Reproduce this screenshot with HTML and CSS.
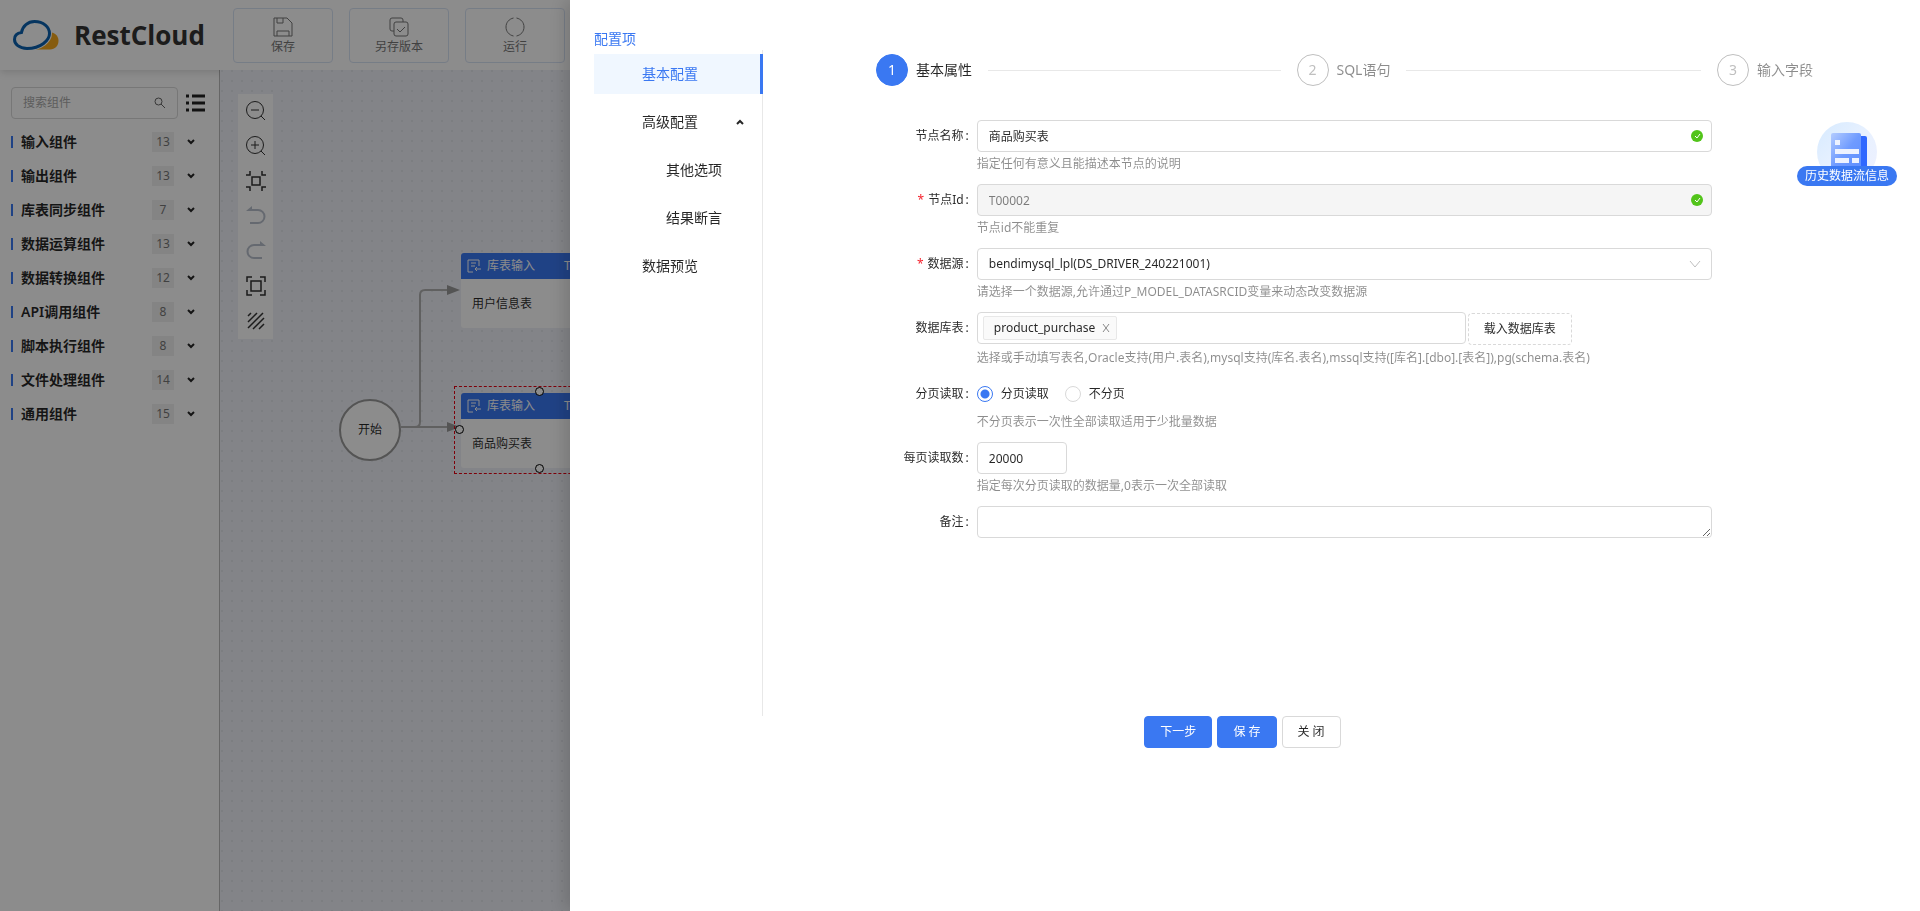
FILE: index.html
```html
<!DOCTYPE html>
<html lang="zh-CN">
<head>
    <meta charset="UTF-8">
    <title>RestCloud</title>
    <link rel="stylesheet" href="styles.css">
</head>
<body>
    <div class="app">
        <header class="header">
            <a class="logo" href="#">
                <svg width="46" height="30" viewBox="0 0 46 30">
                    <path d="M22 29.5h15c5 0 8.5-4 8.5-8.5s-3-8-7-8.5z" fill="#f5a81c"/>
                    <path d="M14 28.5C6 28.5 1.5 24 1.5 19.5c0-4 3-6.5 7-7C9.500 6 15 1.5 21.5 1.5c9 0 15 5.5 15 12s-8.5 15-22.5 15z" fill="#fff" stroke="#fff" stroke-width="5"/>
                    <path d="M14 28.5C6 28.5 1.5 24 1.5 19.5c0-4 3-6.5 7-7C9.500 6 15 1.5 21.5 1.5c9 0 15 5.5 15 12s-8.5 15-22.5 15z" fill="#fff" stroke="#0b62b0" stroke-width="3"/>
                </svg>
                <span>RestCloud</span>
            </a>
            <button class="tool-btn" type="button">
                <svg width="20" height="20" viewBox="0 0 20 20"><path d="M1 1h13l5 5v13H1zM4 1v5h6V1M4 19v-5h12v5"/></svg>
                <span>保存</span>
            </button>
            <button class="tool-btn" type="button">
                <svg width="20" height="20" viewBox="0 0 20 20"><rect x="5" y="5" width="14" height="14" rx="2"/><path d="M5 14H3a2 2 0 0 1-2-2V3a2 2 0 0 1 2-2h9a2 2 0 0 1 2 2v2M8 12l3 3 5-5"/></svg>
                <span>另存版本</span>
            </button>
            <button class="tool-btn" type="button">
                <svg width="20" height="20" viewBox="0 0 20 20"><path d="M8.5 1C4 2 1 5.5 1 10s3 8 7.5 9M11.5 1C16 2 19 5.5 19 10s-3 8-7.5 9"/></svg>
                <span>运行</span>
            </button>
        </header>
        <div class="main">
            <aside class="sidebar">
                <div class="search-row">
                    <div class="search">
                        <input type="text" aria-label="搜索组件" placeholder="搜索组件">
                        <svg width="12" height="12" viewBox="0 0 12 12"><circle cx="4.5" cy="4.5" r="3.5"/><path d="M7 7l4 4"/></svg>
                    </div>
                    <svg class="list-icon" width="19" height="18" viewBox="0 0 19 18"><path d="M0 2h3M6 2h13M0 9h3M6 9h13M0 16h3M6 16h13"/></svg>
                </div>
                <ul class="groups">
                    <li><b>输入组件</b><i>13</i><svg width="8" height="6" viewBox="0 0 8 6"><path d="M1 1l3 3 3-3"/></svg></li>
                    <li><b>输出组件</b><i>13</i><svg width="8" height="6" viewBox="0 0 8 6"><path d="M1 1l3 3 3-3"/></svg></li>
                    <li><b>库表同步组件</b><i>7</i><svg width="8" height="6" viewBox="0 0 8 6"><path d="M1 1l3 3 3-3"/></svg></li>
                    <li><b>数据运算组件</b><i>13</i><svg width="8" height="6" viewBox="0 0 8 6"><path d="M1 1l3 3 3-3"/></svg></li>
                    <li><b>数据转换组件</b><i>12</i><svg width="8" height="6" viewBox="0 0 8 6"><path d="M1 1l3 3 3-3"/></svg></li>
                    <li><b>API调用组件</b><i>8</i><svg width="8" height="6" viewBox="0 0 8 6"><path d="M1 1l3 3 3-3"/></svg></li>
                    <li><b>脚本执行组件</b><i>8</i><svg width="8" height="6" viewBox="0 0 8 6"><path d="M1 1l3 3 3-3"/></svg></li>
                    <li><b>文件处理组件</b><i>14</i><svg width="8" height="6" viewBox="0 0 8 6"><path d="M1 1l3 3 3-3"/></svg></li>
                    <li><b>通用组件</b><i>15</i><svg width="8" height="6" viewBox="0 0 8 6"><path d="M1 1l3 3 3-3"/></svg></li>
                </ul>
            </aside>
            <div class="canvas">
                <div class="zoom-bar">
                    <button type="button" aria-label="缩小"><svg viewBox="0 0 20 20"><circle cx="9" cy="9" r="8.5"/><path d="M5 9h8M15 15l4 4"/></svg></button>
                    <button type="button" aria-label="放大"><svg viewBox="0 0 20 20"><circle cx="9" cy="9" r="8.5"/><path d="M5 9h8M9 5v8M15 15l4 4"/></svg></button>
                    <button type="button" aria-label="适应画布"><svg class="bold" viewBox="0 0 20 20"><path d="M6 6h8v8H6zM0 4h4V0M16 0v4h4M0 16h4v4M20 16h-4v4"/></svg></button>
                    <button type="button" aria-label="撤销"><svg class="off" viewBox="0 0 20 20"><path d="M3 4h9a6 6 0 0 1 0 13H4"/><path class="tip" d="M0 5l6-5v5z"/></svg></button>
                    <button type="button" aria-label="重做"><svg class="off" viewBox="0 0 20 20"><path d="M17 4H8a6 6 0 0 0 0 13h8"/><path class="tip" d="M20 5l-6-5v5z"/></svg></button>
                    <button type="button" aria-label="实际大小"><svg class="bold" viewBox="0 0 20 20"><path d="M5 5h10v10H5zM1 6V1h5M14 1h5v5M1 14v5h5M14 19h5v-5"/></svg></button>
                    <button type="button" aria-label="网格"><svg class="bold" viewBox="0 0 20 20"><path d="M2 5l3-3M2 11l9-9M2 17L17 2M7 18L18 7M13 18l5-5"/></svg></button>
                </div>
                <svg class="edges" width="350" height="500" viewBox="0 0 350 500">
                    <path d="M181 357h47" class="line"/>
                    <path d="M181 357h14q5 0 5-5V225q0-5 5-5h23" class="line"/>
                    <path d="M227 215l13 5-13 5zM227 352l13 5-13 5z" class="head"/>
                </svg>
                <div class="start">开始</div>
                <div class="node node-user">
                    <div class="node-head">
                        <svg width="14" height="14" viewBox="0 0 14 14"><path d="M6 13H1V1h11v6M4 4h5M4 7h4M14 10H8M10 8l-2 2 2 2"/></svg>
                        <span>库表输入</span><em>T00001</em>
                    </div>
                    <div class="node-body">用户信息表</div>
                </div>
                <div class="selection"></div>
                <div class="node node-buy">
                    <div class="node-head">
                        <svg width="14" height="14" viewBox="0 0 14 14"><path d="M6 13H1V1h11v6M4 4h5M4 7h4M14 10H8M10 8l-2 2 2 2"/></svg>
                        <span>库表输入</span><em>T00002</em>
                    </div>
                    <div class="node-body">商品购买表</div>
                </div>
                <span class="port port-top"></span>
                <span class="port port-left"></span>
                <span class="port port-bottom"></span>
            </div>
        </div>
    </div>

    <div class="mask"></div>

    <div class="drawer">
        <div class="drawer-body">
            <nav class="menu">
                <div class="menu-title">配置项</div>
                <ul>
                    <li><a class="active" href="#">基本配置</a></li>
                    <li>
                        <a href="#">高级配置<svg width="8" height="6" viewBox="0 0 8 6"><path d="M1 5l3-3 3 3"/></svg></a>
                        <ul>
                            <li><a href="#">其他选项</a></li>
                            <li><a href="#">结果断言</a></li>
                        </ul>
                    </li>
                    <li><a href="#">数据预览</a></li>
                </ul>
            </nav>
            <div class="content">
                <ol class="steps">
                    <li class="current"><i>1</i><span>基本属性</span></li>
                    <li><i>2</i><span>SQL语句</span></li>
                    <li><i>3</i><span>输入字段</span></li>
                </ol>
                <form class="form">
                    <label for="nodeName">节点名称</label>
                    <div class="field">
                        <div class="control checked">
                            <input type="text" id="nodeName" value="商品购买表">
                            <svg width="12" height="12" viewBox="0 0 12 12"><circle cx="6" cy="6" r="6"/><path d="M4 6l2 2 3-4"/></svg>
                        </div>
                        <p>指定任何有意义且能描述本节点的说明</p>
                    </div>

                    <label for="nodeId" class="required">节点Id</label>
                    <div class="field">
                        <div class="control checked">
                            <input type="text" id="nodeId" value="T00002" disabled>
                            <svg width="12" height="12" viewBox="0 0 12 12"><circle cx="6" cy="6" r="6"/><path d="M4 6l2 2 3-4"/></svg>
                        </div>
                        <p>节点id不能重复</p>
                    </div>

                    <label for="dataSource" class="required">数据源</label>
                    <div class="field">
                        <div class="control arrow">
                            <select id="dataSource">
                                <option>bendimysql_lpl(DS_DRIVER_240221001)</option>
                            </select>
                            <svg width="12" height="8" viewBox="0 0 12 8"><path d="M1 1l5 6 5-6"/></svg>
                        </div>
                        <p>请选择一个数据源,允许通过P_MODEL_DATASRCID变量来动态改变数据源</p>
                    </div>

                    <label for="tableName">数据库表</label>
                    <div class="field">
                        <div class="table-row">
                            <div class="tags">
                                <span class="tag">product_purchase<button type="button" aria-label="移除"><svg width="8" height="8" viewBox="0 0 8 8"><path d="M1 0l6 8M7 0L1 8"/></svg></button></span>
                                <input type="text" id="tableName">
                            </div>
                            <button type="button" class="btn dashed">载入数据库表</button>
                        </div>
                        <p>选择或手动填写表名,Oracle支持(用户.表名),mysql支持(库名.表名),mssql支持([库名].[dbo].[表名]),pg(schema.表名)</p>
                    </div>

                    <label for="pageYes">分页读取</label>
                    <div class="field">
                        <div class="radios">
                            <label><input type="radio" name="page" id="pageYes" checked>分页读取</label>
                            <label><input type="radio" name="page" id="pageNo">不分页</label>
                        </div>
                        <p>不分页表示一次性全部读取适用于少批量数据</p>
                    </div>

                    <label for="pageSize">每页读取数</label>
                    <div class="field">
                        <div class="control small"><input type="text" id="pageSize" value="20000"></div>
                        <p>指定每次分页读取的数据量,0表示一次全部读取</p>
                    </div>

                    <label for="remark">备注</label>
                    <div class="field">
                        <textarea id="remark" rows="1"></textarea>
                    </div>
                </form>
            </div>
        </div>
        <div class="footer">
            <button type="button" class="btn primary">下一步</button>
            <button type="button" class="btn primary">保 存</button>
            <button type="button" class="btn">关 闭</button>
        </div>
        <a class="history" href="#">
            <svg width="60" height="60" viewBox="0 0 60 60">
                <defs>
                    <linearGradient id="disc" x1="0" y1="0" x2="1" y2="1"><stop offset="0" stop-color="#d6eaff"/><stop offset=".5" stop-color="#e8f1ff"/><stop offset="1" stop-color="#eef0ff"/></linearGradient>
                    <linearGradient id="doc" x1="0" y1="0" x2="1" y2="1"><stop offset="0" stop-color="#b4ccff"/><stop offset=".5" stop-color="#6f9bff"/><stop offset="1" stop-color="#5c8dff"/></linearGradient>
                </defs>
                <circle cx="30" cy="30" r="30" fill="url(#disc)"/>
                <rect x="40" y="14" width="10" height="34" rx="2" fill="#3068ff"/>
                <rect x="14" y="11" width="30" height="37" rx="2" fill="url(#doc)"/>
                <path d="M18 18h5v5h-5zM18 27h24v5H18zM18 36h14v5H18zM35 36h7v5h-7z" fill="#edf2ff"/>
            </svg>
            <span>历史数据流信息</span>
        </a>
    </div>
</body>
</html>
```
FILE: styles.css
```css
:root {
    --primary: #3a78f2;
    --border: #d9d9d9;
    --text: rgba(0,0,0,0.85);
    --muted: rgba(0,0,0,0.45);
}

* {
    box-sizing: border-box;
}

body {
    margin: 0;
    height: 100vh;
    overflow: hidden;
    font-family: "Noto Sans", "Noto Sans CJK SC", sans-serif;
    font-size: 12px;
    line-height: 22px;
    color: var(--text);
    background: #fff;
}

ul, ol, p {
    margin: 0;
    padding: 0;
    list-style: none;
}

i, em {
    font-style: normal;
}

a {
    color: inherit;
    text-decoration: none;
}

button, input, select, textarea {
    font: inherit;
    color: inherit;
}

svg {
    display: block;
    flex: none;
    fill: none;
    stroke: currentColor;
}

/* 顶部 */
.app {
    height: 100%;
    display: flex;
    flex-direction: column;
}

.header {
    position: relative;
    flex: none;
    height: 70px;
    padding-left: 13px;
    display: flex;
    align-items: center;
    gap: 16px;
    background: #fff;
    box-shadow: 0 2px 8px rgba(0,0,0,0.15);
}

.logo {
    width: 204px;
    display: flex;
    align-items: center;
    gap: 15px;
    font-family: "Open Sans", "Noto Sans", sans-serif;
    font-size: 26px;
    font-weight: 700;
    color: #333;
}

.logo svg {
    stroke: none;
}

.tool-btn {
    width: 100px;
    height: 55px;
    padding: 4px 0 0;
    display: flex;
    flex-direction: column;
    align-items: center;
    justify-content: center;
    border: 1px solid #d8e3f5;
    border-radius: 4px;
    background: #fff;
    color: #777;
    line-height: 20px;
}

/* 左侧组件 */
.main {
    flex: 1;
    display: flex;
    min-height: 0;
}

.sidebar {
    width: 220px;
    flex: none;
    padding: 17px 14px 0 11px;
    border-right: 1px solid #bbb;
    background: #fff;
}

.search-row {
    display: flex;
    align-items: center;
    gap: 8px;
}

.search {
    flex: 1;
    min-width: 0;
    height: 32px;
    padding: 0 11px;
    display: flex;
    align-items: center;
    border: 1px solid var(--border);
    border-radius: 4px;
    color: #666;
}

.search input {
    flex: 1;
    min-width: 0;
    padding: 0;
    border: none;
    outline: none;
    background: none;
}

.search input::placeholder {
    color: #aaa;
}

.list-icon {
    stroke: #222;
    stroke-width: 3;
}

.groups {
    margin-top: 6px;
}

.groups li {
    height: 34px;
    padding-right: 10px;
    display: flex;
    align-items: center;
}

.groups li::before {
    content: "";
    width: 2px;
    height: 12px;
    margin-right: 8px;
    background: var(--primary);
}

.groups b {
    flex: 1;
    font-size: 14px;
    font-weight: 600;
}

.groups i {
    width: 22px;
    height: 20px;
    margin-right: 13px;
    background: #f0f0f0;
    line-height: 20px;
    text-align: center;
    color: #777;
}

.groups svg {
    stroke-width: 2;
}

/* 画布 */
.canvas {
    position: relative;
    flex: 1;
    overflow: hidden;
    background: radial-gradient(circle at 5px 5px, #e2e5ec 1px, transparent 1px) -3px -4px / 10px 10px #eff1f7;
}

.zoom-bar {
    position: absolute;
    left: 18px;
    top: 24px;
    width: 35px;
    background: #fff;
}

.zoom-bar button {
    width: 35px;
    height: 35px;
    padding: 0 0 1px;
    display: flex;
    align-items: center;
    justify-content: center;
    border: none;
    background: none;
}

.zoom-bar svg {
    width: 20px;
    height: 20px;
    stroke: #333;
}

.zoom-bar .bold {
    stroke-width: 1.5;
}

.zoom-bar .off {
    stroke: #b9c0cc;
    stroke-width: 2;
}

.zoom-bar .tip {
    fill: #b9c0cc;
    stroke: none;
}

.edges {
    position: absolute;
    left: 0;
    top: 0;
}

.edges .line {
    stroke: #b0b0b0;
    stroke-width: 2;
}

.edges .head {
    fill: #999;
    stroke: none;
}

.start {
    position: absolute;
    left: 119px;
    top: 329px;
    width: 62px;
    height: 62px;
    border: 2px solid #999;
    border-radius: 50%;
    background: #fff;
    line-height: 58px;
    text-align: center;
}

.node {
    position: absolute;
    left: 241px;
    width: 158px;
    height: 75px;
    border-radius: 3px;
    overflow: hidden;
    background: #fff;
}

.node-user {
    top: 183px;
}

.node-buy {
    top: 323px;
}

.node-head {
    height: 26px;
    padding: 0 14px 0 6px;
    display: flex;
    align-items: center;
    gap: 6px;
    background: var(--primary);
    color: #fff;
}

.node-head em {
    margin-left: auto;
}

.node-body {
    padding: 0 11px;
    line-height: 49px;
}

.selection {
    position: absolute;
    left: 234px;
    top: 316px;
    width: 172px;
    height: 88px;
    border: 1px dashed #e60012;
}

.port {
    position: absolute;
    width: 9px;
    height: 9px;
    border: 1px solid #000;
    border-radius: 50%;
    background: #fff;
}

.port-top {
    left: 315px;
    top: 317px;
}

.port-left {
    left: 235px;
    top: 355px;
}

.port-bottom {
    left: 315px;
    top: 394px;
}

.mask {
    position: fixed;
    inset: 0;
    background: rgba(0,0,0,0.45);
}

/* 抽屉 */
.drawer {
    position: fixed;
    top: 0;
    right: 0;
    bottom: 0;
    left: 570px;
    padding: 28px 24px;
    background: #fff;
    box-shadow: -6px 0 16px rgba(0,0,0,0.15);
}

.drawer-body {
    display: flex;
    min-height: 688px;
}

.menu {
    width: 169px;
    flex: none;
    display: flex;
    flex-direction: column;
    font-size: 14px;
}

.menu-title {
    color: var(--primary);
}

.menu > ul {
    flex: 1;
    padding-top: 4px;
    border-right: 1px solid #e8e8e8;
}

.menu a {
    height: 40px;
    margin-bottom: 8px;
    padding: 0 18px 0 48px;
    display: flex;
    align-items: center;
    justify-content: space-between;
}

.menu ul ul a {
    padding-left: 72px;
}

.menu a.active {
    margin-right: -1px;
    border-right: 3px solid var(--primary);
    background: #f0f7ff;
    color: var(--primary);
}

.menu svg {
    stroke-width: 2;
}

.content {
    flex: 1;
    padding-top: 26px;
}

.steps {
    margin: 0 83px 34px 113px;
    display: flex;
    gap: 16px;
    font-size: 14px;
}

.steps li {
    display: flex;
    align-items: center;
    color: var(--muted);
}

.steps li:not(:last-child) {
    flex: 1;
}

.steps li:not(:last-child)::after {
    content: "";
    flex: 1;
    height: 1px;
    margin-left: 16px;
    background: #e8e8e8;
}

.steps i {
    width: 32px;
    height: 32px;
    margin-right: 8px;
    border: 1px solid #bfbfbf;
    border-radius: 50%;
    line-height: 30px;
    text-align: center;
    color: #bfbfbf;
}

.steps .current {
    color: var(--text);
}

.steps .current i {
    border-color: var(--primary);
    background: var(--primary);
    color: #fff;
}

.form {
    margin: 0 184px 0 30px;
    display: grid;
    grid-template-columns: 1fr 4fr;
    row-gap: 10px;
}

.form > label {
    padding-right: 8px;
    line-height: 32px;
    text-align: right;
}

.form > label::after {
    content: ":";
    margin-left: 2px;
}

.form .required::before {
    content: "*";
    margin-right: 4px;
    color: #f5222d;
}

.field p {
    height: 22px;
    line-height: 24px;
    color: var(--muted);
}

.control {
    position: relative;
}

.control input,
.control select {
    display: block;
    width: 100%;
    height: 32px;
    padding: 0 11px;
    border: 1px solid var(--border);
    border-radius: 4px;
    background: #fff;
    appearance: none;
}

.control input:disabled {
    background: #f5f5f5;
    color: rgba(0,0,0,0.5);
}

.control svg {
    position: absolute;
    right: 9px;
    top: 10px;
}

.checked circle {
    fill: #52c41a;
    stroke: none;
}

.checked path {
    stroke: #fff;
}

.control.arrow svg {
    right: 11px;
    top: 12px;
    stroke: #bfbfbf;
}

.control.small {
    width: 90px;
}

.table-row {
    height: 34px;
    display: flex;
    gap: 2px;
}

.tags {
    width: 489px;
    height: 32px;
    padding: 0 5px;
    display: flex;
    align-items: center;
    border: 1px solid var(--border);
    border-radius: 4px;
}

.tags input {
    flex: 1;
    min-width: 0;
    border: none;
    outline: none;
    background: none;
}

.tag {
    height: 24px;
    padding: 0 6px 0 10px;
    display: flex;
    align-items: center;
    gap: 7px;
    border: 1px solid #e8e8e8;
    border-radius: 2px;
    background: #fafafa;
}

.tag button {
    padding: 0;
    border: none;
    background: none;
    color: #888;
}

.btn {
    height: 32px;
    padding: 0 15px;
    border: 1px solid var(--border);
    border-radius: 4px;
    background: #fff;
}

.btn.dashed {
    margin-top: 1px;
    border-style: dashed;
}

.btn.primary {
    border-color: var(--primary);
    background: var(--primary);
    color: #fff;
}

.radios {
    height: 32px;
    display: flex;
    gap: 16px;
}

.radios label {
    display: flex;
    align-items: center;
    gap: 8px;
}

.radios input {
    width: 16px;
    height: 16px;
    margin: 0;
    border: 1px solid var(--border);
    border-radius: 50%;
    appearance: none;
}

.radios input:checked {
    border-color: var(--primary);
    background: radial-gradient(circle, var(--primary) 4px, transparent 5px);
}

textarea {
    display: block;
    width: 100%;
    height: 32px;
    padding: 4px 11px;
    border: 1px solid var(--border);
    border-radius: 4px;
    resize: vertical;
}

.footer {
    padding-right: 5px;
    display: flex;
    justify-content: center;
    gap: 5px;
}

.history {
    position: absolute;
    right: 23px;
    top: 122px;
    width: 100px;
    height: 64px;
    display: flex;
    flex-direction: column;
    align-items: center;
}

.history svg {
    stroke: none;
}

.history span {
    position: absolute;
    left: 0;
    right: 0;
    bottom: 0;
    border-radius: 10px;
    background: var(--primary);
    color: #fff;
    line-height: 20px;
    text-align: center;
}
```
